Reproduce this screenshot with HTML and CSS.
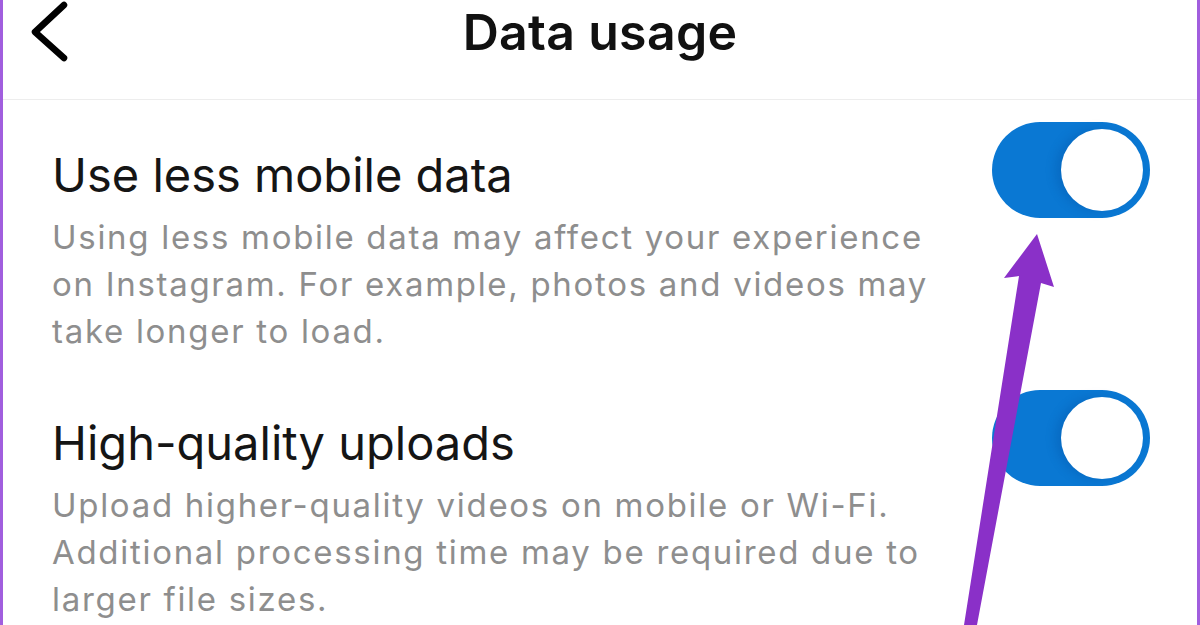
FILE: index.html
```html
<!DOCTYPE html>
<html lang="en">
<head>
  <meta charset="UTF-8">
  <meta name="viewport" content="width=device-width, initial-scale=1.0">
  <title>Data usage</title>
  <link rel="stylesheet" href="styles.css">
</head>
<body>

  <div class="screen">
    <div class="top-bar">
      <a class="back-btn" href="#" aria-label="Back">
        <svg width="40" height="64" viewBox="0 0 40 64">
          <path d="M34 5 L5 32 L34 58" fill="none" stroke="#000" stroke-width="6.5" stroke-linecap="round" stroke-linejoin="round"/>
        </svg>
      </a>
      <h1>Data usage</h1>
      <span></span>
    </div>

    <div class="settings-list">
      <div class="setting-row">
        <div class="setting-text">
          <h2>Use less mobile data</h2>
          <p>Using less mobile data may affect your experience on Instagram. For example, photos and videos may take longer to load.</p>
        </div>
        <label class="switch">
          <input type="checkbox" checked>
          <span class="knob"></span>
        </label>
      </div>

      <div class="setting-row">
        <div class="setting-text">
          <h2>High-quality uploads</h2>
          <p>Upload higher-quality videos on mobile or Wi-Fi. Additional processing time may be required due to larger file sizes.</p>
        </div>
        <label class="switch">
          <input type="checkbox" checked>
          <span class="knob"></span>
        </label>
      </div>
    </div>

    <!-- annotation arrow -->
    <svg class="arrow" width="1200" height="625" viewBox="0 0 1200 625">
      <polygon points="1037,234 1054,287 1041,283 977,625 964,625 1019,276 1004,278" fill="#8a30c8"/>
    </svg>
  </div>

</body>
</html>
```

FILE: styles.css
```css
* {
  box-sizing: border-box;
}

body {
  margin: 0;
  font-family: Inter, "Noto Sans", sans-serif;
  background-color: #fff;
  color: #111;
}

.screen {
  position: relative;
  width: 1200px;
  height: 625px;
  overflow: hidden;
  border-left: 3px solid #a15ede;
  border-right: 3px solid #a15ede;
}

.top-bar {
  display: grid;
  grid-template-columns: 1fr auto 1fr;
  align-items: center;
  height: 100px;
  padding-bottom: 36px;
  border-bottom: 1px solid #ededed;
}

.back-btn {
  display: flex;
  margin-left: 27px;
}

.top-bar h1 {
  margin: 0;
  font-size: 50px;
  font-weight: 600;
  letter-spacing: 0.3px;
}

.settings-list {
  padding: 22px 47px 0 49px;
}

.setting-row {
  display: flex;
  align-items: flex-start;
  justify-content: space-between;
  margin-bottom: 35px;
}

.setting-text {
  padding-top: 24px;
  width: 890px;
}

.setting-text h2 {
  margin: 0 0 10px;
  font-size: 47px;
  font-weight: 400;
  line-height: 58px;
  color: #151515;
}

.setting-text p {
  margin: 0;
  font-size: 33px;
  line-height: 47px;
  letter-spacing: 1.7px;
  color: #8e8e8e;
}

.switch {
  position: relative;
  display: block;
  width: 158px;
  height: 96px;
  flex-shrink: 0;
  cursor: pointer;
}

.switch input {
  display: none;
}

.knob {
  position: absolute;
  inset: 0;
  border-radius: 48px;
  background-color: #c8c8cc;
}

.knob::after {
  content: "";
  position: absolute;
  top: 7px;
  left: 7px;
  width: 82px;
  height: 82px;
  border-radius: 50%;
  background: #fff;
  box-shadow: -6px 0 10px rgba(0, 70, 150, 0.25);
}

.switch input:checked + .knob {
  background-color: #0a78d3;
}

.switch input:checked + .knob::after {
  left: 69px;
}

.arrow {
  position: absolute;
  top: 0;
  left: -3px;
  pointer-events: none;
}
```
